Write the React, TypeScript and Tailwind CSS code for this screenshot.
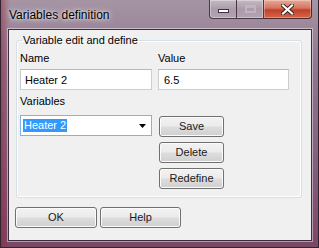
import React from "react";

const font = "font-['Liberation_Sans',Arial,sans-serif]";

const Btn: React.FC<{ label: string; className?: string }> = ({ label, className = "" }) => (
  <button
    type="button"
    className={`h-[21px] rounded-[3px] border border-[#707070] bg-[linear-gradient(180deg,#f2f2f2_0%,#ebebeb_48%,#dddddd_52%,#cfcfcf_100%)] text-[11px] font-normal leading-none text-[#1a1a1a] shadow-[inset_0_0_0_1px_#fbfbfb] ${className}`}
  >
    {label}
  </button>
);

const CaptionButtons: React.FC = () => (
  <div className="flex h-[19px]">
    <div className="flex rounded-bl-[4px] border border-t-0 border-[#4a3748] bg-[linear-gradient(180deg,rgba(255,255,255,0.35),rgba(255,255,255,0.1)_50%,rgba(255,255,255,0.2))] shadow-[inset_0_0_0_1px_rgba(255,255,255,0.35)]">
      <div className="flex w-[27px] items-center justify-center border-r border-[#4a3748]">
        <div className="mt-[3px] h-[4px] w-[11px] border border-[#3d3040] bg-white" />
      </div>
      <div className="flex w-[26px] items-center justify-center">
        <div className="h-[8px] w-[11px] border-2 border-t-[3px] border-[#c9bcc7] bg-transparent opacity-70" />
      </div>
    </div>
    <div className="flex w-[48px] items-center justify-center rounded-br-[4px] border border-l-0 border-t-0 border-[#4a2a2a] bg-[linear-gradient(180deg,#e9a996_0%,#d27560_45%,#c2402b_55%,#d8644a_100%)] shadow-[inset_0_0_0_1px_rgba(255,255,255,0.3)]">
      <svg width="13" height="11" viewBox="0 0 13 11">
        <path d="M2 1.5 L11 9.5 M11 1.5 L2 9.5" stroke="#3a2020" strokeWidth="4" strokeLinecap="square" />
        <path d="M2 1.5 L11 9.5 M11 1.5 L2 9.5" stroke="#ffffff" strokeWidth="2.2" strokeLinecap="square" />
      </svg>
    </div>
  </div>
);

export default function App() {
  return (
    <div
      className={`${font} flex h-[248px] w-[319px] flex-col overflow-hidden border border-t-0 border-[#2f2430] bg-[linear-gradient(90deg,rgba(150,30,50,0.45)_0px,rgba(150,30,50,0)_9px),linear-gradient(180deg,#a595a3_0%,#927790_25%,#85627f_60%,#7a4866_100%)] pl-[7px] pr-[6px] text-black`}
    >
      {/* title bar */}
      <div className="flex h-[29px] items-start justify-between">
        <div className="pl-[1px] pt-[8px] text-[12px] leading-[15px] text-black [text-shadow:0_0_6px_rgba(255,255,255,0.9),0_0_3px_rgba(255,255,255,0.8)]">
          Variables definition
        </div>
        <CaptionButtons />
      </div>

      {/* client */}
      <div className="h-[212px] w-[304px] border border-[#3d2e3b] bg-[#f0f0f0] shadow-[0_0_0_1px_rgba(255,255,255,0.45)]">
        <fieldset className="ml-[7px] mt-[4px] h-[164px] w-[286px] rounded-[3px] border border-[#d5dfe5] pl-[3px] shadow-[inset_0_0_0_1px_#fff]">
          <legend className="ml-[2px] px-[1px] text-[11px] leading-[13px]">Variable edit and define</legend>

          <div className="mt-[5px] grid grid-cols-[132px_131px] gap-x-[6px] text-[11px]">
            <div className="leading-[13px]">Name</div>
            <div className="leading-[13px]">Value</div>
            <input
              readOnly
              value="Heater 2"
              className="mt-[4px] h-[21px] border border-[#c9ced4] border-t-[#b3b8bf] bg-white pl-[4px] text-[11px] outline-none"
            />
            <input
              readOnly
              value="6.5"
              className="mt-[4px] h-[21px] border border-[#c9ced4] border-t-[#b3b8bf] bg-white pl-[5px] text-[11px] outline-none"
            />
          </div>

          <div className="mt-[5px] flex text-[11px]">
            <div className="flex w-[132px] flex-col">
              <div className="leading-[13px]">Variables</div>
              <div className="mt-[7px] flex h-[21px] items-center justify-between border border-[#7eb4ea] bg-white pl-[2px] pr-[5px]">
                <span className="bg-[#3399ff] px-[1px] leading-[13px] text-white">Heater 2</span>
                <svg width="7" height="4" viewBox="0 0 7 4">
                  <path d="M0 0 H7 L3.5 4 Z" fill="#000" />
                </svg>
              </div>
            </div>
            <div className="ml-[7px] flex flex-col gap-[5px] pt-[21px]">
              <Btn label="Save" className="w-[65px]" />
              <Btn label="Delete" className="w-[65px]" />
              <Btn label="Redefine" className="w-[65px]" />
            </div>
          </div>
        </fieldset>

        <div className="ml-[6px] mt-[9px] flex gap-[3px]">
          <Btn label="OK" className="w-[82px]" />
          <Btn label="Help" className="w-[81px]" />
        </div>
      </div>
    </div>
  );
}
